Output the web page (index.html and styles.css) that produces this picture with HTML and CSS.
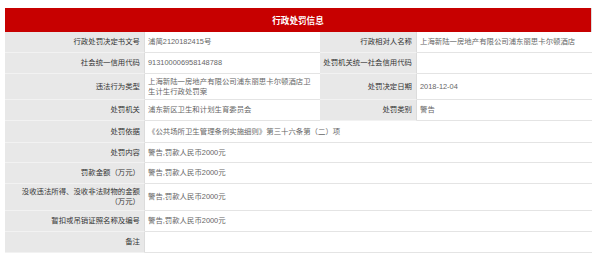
FILE: index.html
```html
<!DOCTYPE html>
<html lang="zh-CN">
<head>
<meta charset="utf-8">
<title>行政处罚信息</title>
<link rel="stylesheet" href="styles.css">
</head>
<body>
<div class="panel">
  <div class="panel-head">行政处罚信息</div>
  <div class="grid">
    <div class="lbl r1">行政处罚决定书文号</div>
    <div class="val r1">浦简2120182415号</div>
    <div class="lbl r1">行政相对人名称</div>
    <div class="val r1">上海新陆一房地产有限公司浦东丽思卡尔顿酒店</div>

    <div class="lbl r2">社会统一信用代码</div>
    <div class="val r2">913100006958148788</div>
    <div class="lbl r2">处罚机关统一社会信用代码</div>
    <div class="val r2"></div>

    <div class="lbl r3">违法行为类型</div>
    <div class="val r3">上海新陆一房地产有限公司浦东丽思卡尔顿酒店卫<br>生计生行政处罚案</div>
    <div class="lbl r3 sub">处罚决定日期</div>
    <div class="val r3">2018-12-04</div>

    <div class="lbl r4">处罚机关</div>
    <div class="val r4">浦东新区卫生和计划生育委员会</div>
    <div class="lbl r4 sub">处罚类别</div>
    <div class="val r4">警告</div>

    <div class="lbl r5">处罚依据</div>
    <div class="val wide r5">《公共场所卫生管理条例实施细则》第三十六条第（二）项</div>

    <div class="lbl r6">处罚内容</div>
    <div class="val wide r6">警告,罚款人民币2000元</div>

    <div class="lbl r7">罚款金额（万元）</div>
    <div class="val wide r7">警告,罚款人民币2000元</div>

    <div class="lbl r8">没收违法所得、没收非法财物的金额<br>（万元）</div>
    <div class="val wide r8">警告,罚款人民币2000元</div>

    <div class="lbl r9">暂扣或吊销证照名称及编号</div>
    <div class="val wide r9">警告,罚款人民币2000元</div>

    <div class="lbl r10">备注</div>
    <div class="val wide r10"></div>
  </div>
</div>
</body>
</html>
```
FILE: styles.css
```css
* { box-sizing: border-box; }
html, body { background: #ffffff; }
body {
  margin: 8px 8px 0 5px;
  font-family: "Liberation Sans", "Noto Sans CJK SC", sans-serif;
  font-size: 7.4px;
  color: #666;
}
.panel {
  width: 587px;
  border-right: 1px solid #dcdcdc;
}
.panel-head {
  height: 24px;
  background: #c70000;
  color: #ffffff;
  font-weight: bold;
  font-size: 8.6px;
  display: flex;
  align-items: center;
  justify-content: center;
}
.grid {
  display: grid;
  grid-template-columns: 140px 175px 97px 175px;
  grid-template-rows: 21px 21px 26px 21px 22px 20px 21px 27px 21px 21px;
}
.lbl, .val {
  display: flex;
  align-items: center;
  border-bottom: 1px solid #e0e0e0;
  line-height: 10px;
}
.lbl {
  background: #e8e8e8;
  color: #333;
  justify-content: flex-end;
  text-align: right;
  padding-right: 4px;
  border-right: 1px solid #dcdcdc;
  border-bottom-color: #f2f2f2;
}
.val {
  background: #ffffff;
  padding-left: 3px;
  border-bottom: 1px solid #e4e4e4;
}
.wide { grid-column: 2 / 5; }
```
